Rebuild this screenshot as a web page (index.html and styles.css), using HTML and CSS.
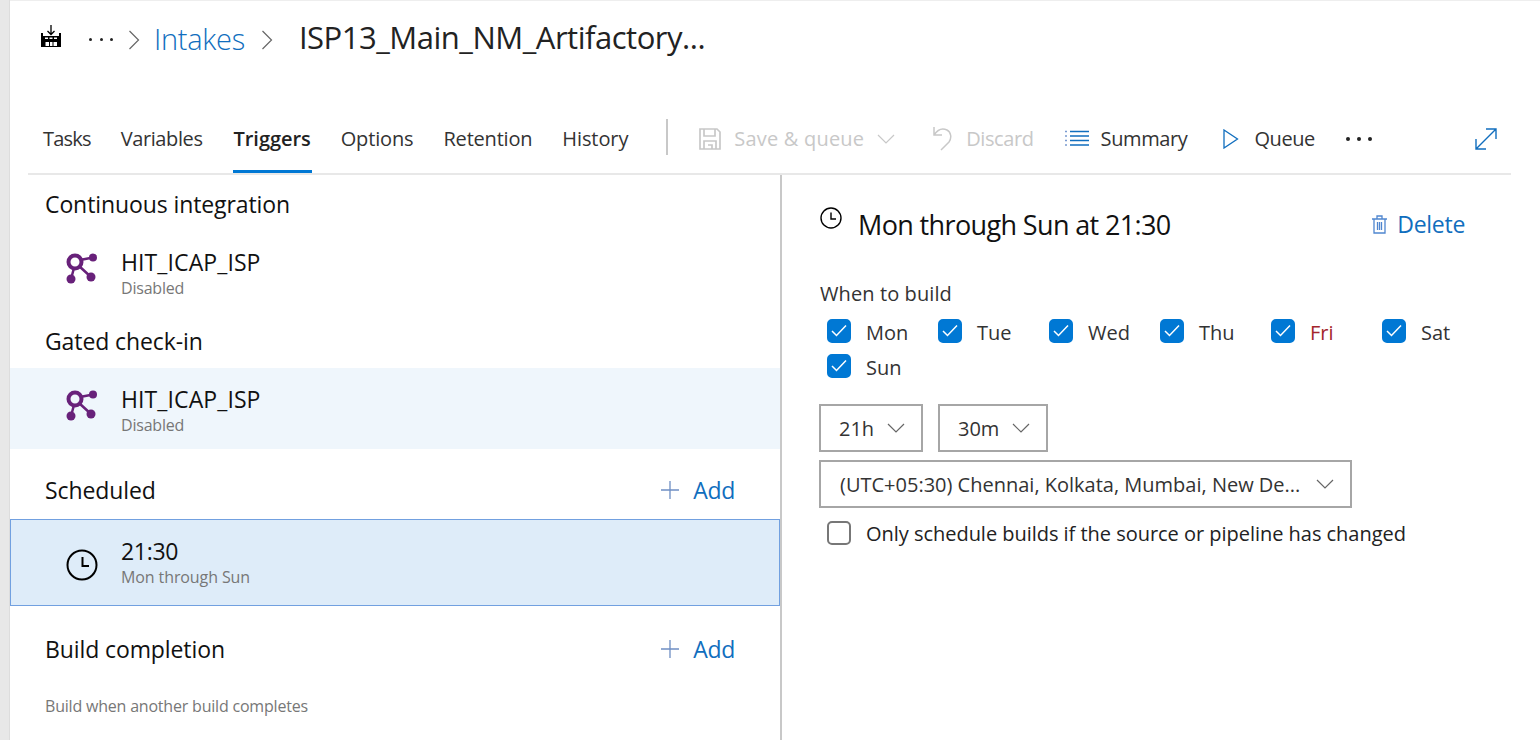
FILE: index.html
```html
<!DOCTYPE html>
<html lang="en">
<head>
<meta charset="utf-8">
<title>Triggers</title>
<link rel="stylesheet" href="styles.css">
</head>
<body>
<div class="rail"></div>
<div class="page">
  <header class="crumbs">
    <svg class="factory" width="20" height="23" viewBox="0 0 20 23"><path d="M10 0v9.500M6.500 6l3.500 3.500L13.500 6" fill="none" stroke="#000" stroke-width="1.300"/><path d="M0 8h2v3h16V8h2v14H0z" fill="#000"/><path d="M4 12.500h3V14H4zM8.500 12.500h3V14h-3zM13 12.500h3V14h-3zM4.500 17H8v4H4.500zM9 17h2.500v4H9zM12.500 17H16v4h-3.500z" fill="#fff"/></svg>
    <span class="dots crumb-dots"><i></i><i></i><i></i></span>
    <svg class="chev" width="12" height="20" viewBox="0 0 12 20"><path d="M1.500 1l9 9-9 9" fill="none" stroke="#666" stroke-width="1.200"/></svg>
    <a class="crumb-link">Intakes</a>
    <svg class="chev chev2" width="12" height="20" viewBox="0 0 12 20"><path d="M1.500 1l9 9-9 9" fill="none" stroke="#666" stroke-width="1.200"/></svg>
    <h1 class="title">ISP13_Main_NM_Artifactory...</h1>
  </header>
  <nav class="toolbar">
    <a class="tab t-tasks">Tasks</a>
    <a class="tab t-vars">Variables</a>
    <a class="tab active">Triggers</a>
    <a class="tab t-opts">Options</a>
    <a class="tab t-ret">Retention</a>
    <a class="tab t-hist">History</a>
    <span class="sep"></span>
    <span class="cmd off save">
      <svg width="22" height="22" viewBox="0 0 22 22"><path d="M1 1h17l3 3v17H1zM5 1v7h11V1M5 21v-8h12v8M9 17h4v4" fill="none" stroke="#c8c8c8" stroke-width="1.700"/></svg>
      <span>Save &amp; queue</span>
      <svg class="down" width="18" height="10" viewBox="0 0 18 10"><path d="M1 1l8 8 8-8" fill="none" stroke="#c8c8c8" stroke-width="1.200"/></svg>
    </span>
    <span class="cmd off discard">
      <svg width="20" height="25" viewBox="0 0 20 25"><path d="M1 1v8h8M1 9c4-6 9-7 13-5 4 2 5 8 2 12l-8 8" fill="none" stroke="#c8c8c8" stroke-width="1.500"/></svg>
      <span>Discard</span>
    </span>
    <span class="cmd summary">
      <svg width="24" height="17" viewBox="0 0 24 17"><path d="M5 1.500h19M5 6h19M5 10.500h19M5 15h19" stroke="#106ebe" stroke-width="1.500"/><path d="M0 1.500h2M0 6h2M0 10.500h2M0 15h2" stroke="#7a9ad0" stroke-width="1.500"/></svg>
      <span>Summary</span>
    </span>
    <span class="cmd queue">
      <svg width="16" height="20" viewBox="0 0 16 20"><path d="M1 1l13.500 9L1 19z" fill="none" stroke="#106ebe" stroke-width="1.300"/></svg>
      <span>Queue</span>
    </span>
    <span class="dots bar-dots"><i></i><i></i><i></i></span>
    <svg class="expand" width="22" height="22" viewBox="0 0 22 22"><path d="M1 21L21 1M11 1h10v10M1 11v10h10" fill="none" stroke="#106ebe" stroke-width="1.400"/></svg>
  </nav>
  <main class="panels">
    <section class="left">
      <h2 class="sec first">Continuous integration</h2>
      <div class="item">
        <svg class="repo" width="32" height="32" viewBox="0 0 32 32"><use href="#repo-icon"/></svg>
        <div class="item-text"><div class="name">HIT_ICAP_ISP</div><div class="sub">Disabled</div></div>
      </div>
      <h2 class="sec gated">Gated check-in</h2>
      <div class="item hover">
        <svg class="repo" width="32" height="32" viewBox="0 0 32 32"><use href="#repo-icon"/></svg>
        <div class="item-text"><div class="name">HIT_ICAP_ISP</div><div class="sub">Disabled</div></div>
      </div>
      <div class="sec-row sched">
        <h2 class="sec">Scheduled</h2>
        <a class="add"><svg width="18" height="18" viewBox="0 0 18 18"><path d="M9 0v18M0 9h18" stroke="#6f8fc4" stroke-width="1.300"/></svg><span>Add</span></a>
      </div>
      <div class="item selected">
        <svg class="clock" width="32" height="32" viewBox="0 0 32 32"><circle cx="16" cy="16" r="14.500" fill="none" stroke="#000" stroke-width="2"/><path d="M16.500 8v9H23" fill="none" stroke="#000" stroke-width="2"/></svg>
        <div class="item-text"><div class="name">21:30</div><div class="sub">Mon through Sun</div></div>
      </div>
      <div class="sec-row build">
        <h2 class="sec">Build completion</h2>
        <a class="add"><svg width="18" height="18" viewBox="0 0 18 18"><path d="M9 0v18M0 9h18" stroke="#6f8fc4" stroke-width="1.300"/></svg><span>Add</span></a>
      </div>
      <p class="hint">Build when another build completes</p>
    </section>
    <section class="right">
      <div class="detail-head">
        <svg class="small-clock" width="22" height="22" viewBox="0 0 22 22"><circle cx="11" cy="11" r="10" fill="none" stroke="#000" stroke-width="1.400"/><path d="M11 5.500V12h5" fill="none" stroke="#000" stroke-width="1.400"/></svg>
        <h2 class="detail-title">Mon through Sun at 21:30</h2>
        <a class="delete">
          <svg width="15" height="19" viewBox="0 0 15 19"><path d="M0 4h15M5 4V1h5v3M2 4v14h11V4M5.500 7v8M7.500 7v8M9.500 7v8" fill="none" stroke="#4f86cf" stroke-width="1.300"/></svg>
          <span>Delete</span>
        </a>
      </div>
      <div class="label">When to build</div>
      <div class="days">
        <label class="day"><span class="box on"><svg width="16" height="13" viewBox="0 0 16 13"><path d="M1 7l4.500 4.500L15 1.500" fill="none" stroke="#fff" stroke-width="1.500"/></svg></span>Mon</label>
        <label class="day"><span class="box on"><svg width="16" height="13" viewBox="0 0 16 13"><path d="M1 7l4.500 4.500L15 1.500" fill="none" stroke="#fff" stroke-width="1.500"/></svg></span>Tue</label>
        <label class="day"><span class="box on"><svg width="16" height="13" viewBox="0 0 16 13"><path d="M1 7l4.500 4.500L15 1.500" fill="none" stroke="#fff" stroke-width="1.500"/></svg></span>Wed</label>
        <label class="day"><span class="box on"><svg width="16" height="13" viewBox="0 0 16 13"><path d="M1 7l4.500 4.500L15 1.500" fill="none" stroke="#fff" stroke-width="1.500"/></svg></span>Thu</label>
        <label class="day"><span class="box on"><svg width="16" height="13" viewBox="0 0 16 13"><path d="M1 7l4.500 4.500L15 1.500" fill="none" stroke="#fff" stroke-width="1.500"/></svg></span><span class="fri">Fri</span></label>
        <label class="day"><span class="box on"><svg width="16" height="13" viewBox="0 0 16 13"><path d="M1 7l4.500 4.500L15 1.500" fill="none" stroke="#fff" stroke-width="1.500"/></svg></span>Sat</label>
        <label class="day"><span class="box on"><svg width="16" height="13" viewBox="0 0 16 13"><path d="M1 7l4.500 4.500L15 1.500" fill="none" stroke="#fff" stroke-width="1.500"/></svg></span>Sun</label>
      </div>
      <div class="times">
        <div class="select hour"><span>21h</span><svg width="18" height="10" viewBox="0 0 18 10"><path d="M1 1l8 8 8-8" fill="none" stroke="#666" stroke-width="1.200"/></svg></div>
        <div class="select minute"><span>30m</span><svg width="18" height="10" viewBox="0 0 18 10"><path d="M1 1l8 8 8-8" fill="none" stroke="#666" stroke-width="1.200"/></svg></div>
      </div>
      <div class="select zone"><span>(UTC+05:30) Chennai, Kolkata, Mumbai, New De...</span><svg width="18" height="10" viewBox="0 0 18 10"><path d="M1 1l8 8 8-8" fill="none" stroke="#666" stroke-width="1.200"/></svg></div>
      <label class="only"><span class="box"></span>Only schedule builds if the source or pipeline has changed</label>
    </section>
  </main>
</div>
<svg class="defs" width="0" height="0">
  <symbol id="repo-icon" viewBox="0 0 32 32">
    <path d="M14 7l13-2.500M13 13l12 11M8 15L5 26" fill="none" stroke="#68217a" stroke-width="2.500"/>
    <circle cx="9" cy="9" r="6.500" fill="none" stroke="#68217a" stroke-width="4"/>
    <circle cx="27" cy="4.500" r="4" fill="#68217a"/>
    <circle cx="25" cy="24" r="4.500" fill="#68217a"/>
    <circle cx="5" cy="26" r="4.500" fill="#68217a"/>
  </symbol>
</svg>
</body>
</html>
```

FILE: styles.css
```css
* { box-sizing: border-box; }
html, body { margin: 0; height: 100%; overflow: hidden; }
body {
  display: flex;
  background: #fff;
  color: #222;
  font-family: "Open Sans", "Noto Sans", sans-serif;
}
.rail { width: 10px; flex: none; background: #e8e8e8; border-right: 1px solid #ddd; }
.page { flex: 1; display: flex; flex-direction: column; min-width: 0; }
.defs { position: absolute; }

.crumbs { height: 110px; flex: none; display: flex; align-items: flex-start; padding: 26px 0 0 31px; border-top: 1px solid #eee; }
.factory { margin-top: -2px; }
.dots { display: inline-flex; }
.dots i { width: 3px; height: 3px; border-radius: 50%; background: #222; }
.crumb-dots { gap: 7.500px; margin: 11px 0 0 28px; }
.chev { margin: 3px 0 0 15px; }
.crumb-link { margin: -8px 0 0 14px; font-size: 29px; line-height: 40px; font-weight: 300; color: #106ebe; letter-spacing: -.3px; }
.chev2 { margin-left: 16px; }
.title { margin: -10px 0 0 26px; font-size: 31px; line-height: 40px; font-weight: 400; color: #222; letter-spacing: -.48px; }

.toolbar { height: 65px; flex: none; display: flex; align-items: center; margin: 0 29px 0 18px; padding: 0 0 6px 14px; border-bottom: 2px solid #e8e8e8; }
.tab { height: 62px; margin: 0 28px -6px 0; padding: 0 1px 4px; display: flex; align-items: center; font-size: 20px; letter-spacing: -.3px; color: #333; border-bottom: 3px solid transparent; }
.t-tasks { letter-spacing: -.8px; }
.t-vars { letter-spacing: -.4px; margin-right: 29px; }
.t-opts { letter-spacing: -.15px; }
.t-ret { letter-spacing: -.2px; }
.t-hist { letter-spacing: -.1px; margin-right: 27px; }
.tab.active { font-weight: 600; color: #222; border-bottom-color: #0078d4; letter-spacing: -.05px; }
.sep { width: 2px; height: 36px; background: #c8c8c8; margin: 0 31px 4px 10px; }
.cmd { display: flex; align-items: center; gap: 13px; font-size: 20px; letter-spacing: -.4px; color: #333; }
.cmd.off { color: #c8c8c8; }
.save { letter-spacing: .2px; }
.discard { margin-left: 38px; }
.summary { margin-left: 31px; gap: 12px; }
.queue { margin-left: 36px; gap: 15px; }
.bar-dots { margin-left: 31px; gap: 7px; }
.bar-dots i { width: 4px; height: 4px; }
.expand { margin-left: auto; margin-right: 14px; }

.panels { flex: 1; display: flex; min-height: 0; }
.left { width: 772px; flex: none; border-right: 2px solid #c8c8c8; }
.right { flex: 1; padding: 0 45px 0 37px; }

.sec { margin: 0; font-size: 23px; line-height: 30px; font-weight: 400; color: #111; letter-spacing: -.1px; }
.first, .gated { height: 56px; padding-left: 35px; padding-top: 14px; }
.item { height: 81px; display: flex; align-items: center; padding: 4px 0 0 56px; }
.repo { margin: 0 23px 9px 0; }
.hover { background: #eff6fc; }
.selected { height: 87px; padding: 0 0 0 55px; background: #deecf9; border: 1px solid #71a0e0; }
.clock { margin: 4px 23px 0 0; }
.name { font-size: 23px; line-height: 28px; color: #111; letter-spacing: .1px; }
.selected .name { letter-spacing: -.3px; }
.sub { font-size: 16px; line-height: 24px; color: #777; letter-spacing: -.2px; }
.selected .sub { letter-spacing: -.1px; }

.sec-row { display: flex; justify-content: space-between; align-items: center; padding: 0 45px 0 35px; }
.sched { height: 70px; padding-top: 12px; }
.build { height: 88px; padding-bottom: 2px; }
.add { display: flex; align-items: center; gap: 14px; font-size: 23px; color: #106ebe; letter-spacing: -.3px; }
.hint { margin: 0; padding: 0 0 0 35px; font-size: 16px; line-height: 24px; color: #777; letter-spacing: -.2px; }

.detail-head { display: flex; align-items: flex-start; height: 100px; padding: 30px 30px 0 0; }
.small-clock { margin: 2px 16px 0 1px; }
.detail-title { margin: 0; flex: 1; font-size: 27px; line-height: 40px; font-weight: 400; color: #111; letter-spacing: -.63px; }
.delete { display: flex; align-items: center; gap: 10px; height: 38px; font-size: 23px; color: #106ebe; letter-spacing: -.3px; }
.label { padding-left: 1px; font-size: 20px; line-height: 38px; color: #333; letter-spacing: .1px; }
.days { display: flex; flex-wrap: wrap; padding-left: 8px; }
.day { width: 111px; height: 35px; display: flex; align-items: center; gap: 15px; padding-top: 4px; font-size: 20px; color: #333; }
.day .box { margin-bottom: 4px; }
.fri { color: #a4262c; }
.box { width: 24px; height: 24px; flex: none; display: flex; align-items: center; justify-content: center; border-radius: 5px; border: 2px solid #777; }
.box.on { background: #0078d4; border-color: #0078d4; }
.times { display: flex; gap: 15px; margin-top: 21px; }
.select { height: 48px; display: flex; align-items: center; justify-content: space-between; padding: 0 16px 0 18px; border: 2px solid #a6a6a6; font-size: 20px; color: #333; }
.hour { width: 104px; }
.minute { width: 110px; }
.zone { width: 533px; margin-top: 8px; padding-left: 19px; letter-spacing: 0; }
.only { display: flex; align-items: center; gap: 15px; height: 50px; padding-left: 8px; font-size: 20px; color: #222; letter-spacing: -.03px; }
```
